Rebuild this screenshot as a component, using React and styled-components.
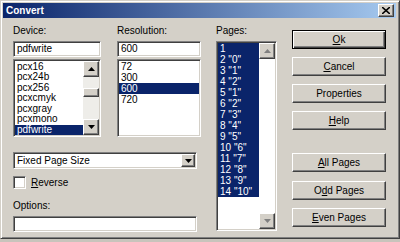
import React from "react";
import styled, { createGlobalStyle } from "styled-components";

const Global = createGlobalStyle`
  html, body { margin: 0; padding: 0; background: #c8c4bc; }
  body { font-family: "Liberation Sans", Arial, sans-serif; font-size: 10px; color: #000; }
`;

const raised = `
  border: 1px solid;
  border-color: #fff #404040 #404040 #fff;
  box-shadow: inset -1px -1px #808080, inset 1px 1px #d4d0c8;
`;

const sunken = `
  border: 1px solid;
  border-color: #808080 #fff #fff #808080;
  box-shadow: inset 1px 1px #404040, inset -1px -1px #d4d0c8;
`;

const Window = styled.div`
  width: 400px;
  height: 239px;
  box-sizing: border-box;
  background: #d4d0c8;
  border: 1px solid;
  border-color: #d4d0c8 #404040 #404040 #d4d0c8;
  box-shadow: inset 1px 1px #fff, inset -1px -1px #808080;
  padding: 2px 3px 3px 2px;
  display: flex;
  flex-direction: column;
`;

const TitleBar = styled.div`
  height: 15px;
  background: linear-gradient(to right, #0a246a, #a6caf0);
  display: flex;
  align-items: center;
  justify-content: space-between;
  padding: 0 2px 0 3px;
  color: #fff;
  font-weight: bold;
  font-size: 10px;
`;

const CloseButton = styled.div`
  ${raised}
  width: 14px;
  height: 11px;
  background: #d4d0c8;
  display: flex;
  align-items: center;
  justify-content: center;
`;

const Body = styled.div`
  display: flex;
  padding: 6px 0 0 10px;
`;

const LeftArea = styled.div`
  width: 188px;
  display: flex;
  flex-direction: column;
`;

const TopRow = styled.div`
  display: flex;
  gap: 16px;
`;

const Column = styled.div`
  width: ${p => p.$w}px;
  display: flex;
  flex-direction: column;
`;

const Label = styled.div`
  height: 13px;
  line-height: 13px;
  margin-bottom: 4px;
  margin-top: ${p => p.$top || 0}px;
`;

const Edit = styled.div`
  ${sunken}
  height: 16px;
  box-sizing: border-box;
  width: ${p => (p.$w ? `${p.$w}px` : "100%")};
  background: #fff;
  padding: 0 3px;
  line-height: 14px;
`;

const ListBox = styled.div`
  ${sunken}
  box-sizing: border-box;
  height: ${p => p.$h}px;
  margin-top: ${p => p.$top || 0}px;
  background: #fff;
  padding: 1px;
  display: flex;
`;

const Items = styled.div`
  flex: 1;
  overflow: hidden;
  display: flex;
  flex-direction: column;
  justify-content: ${p => (p.$bottom ? "flex-end" : "flex-start")};
`;

const Item = styled.div`
  flex: none;
  height: ${p => p.$h || 11}px;
  line-height: ${p => p.$h || 11}px;
  padding-left: 2px;
  white-space: pre;
  background: ${p => (p.$sel ? "#0a246a" : "transparent")};
  color: ${p => (p.$sel ? "#fff" : "#000")};
`;

const ScrollBar = styled.div`
  width: 16px;
  display: flex;
  flex-direction: column;
  background: ${p => (p.$disabled ? "#fff" : "#eeede9")};
`;

const ScrollButton = styled.div`
  ${raised}
  box-sizing: border-box;
  height: 16px;
  background: #d4d0c8;
  display: flex;
  align-items: center;
  justify-content: center;
  margin-top: ${p => p.$top || 0}px;
`;

const Thumb = styled.div`
  ${raised}
  box-sizing: border-box;
  height: 9px;
  background: #d4d0c8;
  margin-top: ${p => p.$top}px;
`;

const Spacer = styled.div`
  flex: 1;
`;

const Combo = styled.div`
  ${sunken}
  box-sizing: border-box;
  height: 17px;
  width: 184px;
  margin-top: 15px;
  background: #fff;
  display: flex;
  align-items: center;
  padding: 1px 1px 1px 3px;
`;

const ComboText = styled.div`
  flex: 1;
`;

const ComboButton = styled(ScrollButton)`
  width: 14px;
  height: 13px;
`;

const CheckRow = styled.label`
  display: flex;
  align-items: center;
  gap: 5px;
  margin-top: 7px;
  height: 13px;
`;

const CheckBox = styled.div`
  ${sunken}
  box-sizing: border-box;
  width: 13px;
  height: 13px;
  background: #fff;
`;

const PagesColumn = styled(Column)`
  margin-left: 15px;
`;

const ButtonColumn = styled.div`
  width: 94px;
  margin-left: 15px;
  padding-top: 6px;
  display: flex;
  flex-direction: column;
`;

const Button = styled.div`
  ${raised}
  box-sizing: border-box;
  height: 19px;
  margin-top: ${p => p.$top || 0}px;
  display: flex;
  align-items: center;
  justify-content: center;
  background: #d4d0c8;
  ${p =>
    p.$default &&
    `
    border: 1px solid #000;
    box-shadow: inset 1px 1px #fff, inset -1px -1px #404040, inset -2px -2px #808080;
  `}
`;

const Under = styled.span`
  text-decoration: underline;
`;

const Arrow = ({ up, gray }) => (
  <svg width="7" height="4" viewBox="0 0 7 4">
    <path d={up ? "M3.5 0 L7 4 L0 4 Z" : "M0 0 L7 0 L3.5 4 Z"} fill={gray ? "#808080" : "#000"} />
  </svg>
);

const devices = ["pcx16", "pcx24b", "pcx256", "pcxcmyk", "pcxgray", "pcxmono", "pdfwrite"];
const resolutions = ["72", "300", "600", "720"];
const pages = ["1", '2 "0"', '3 "1"', '4 "2"', '5 "1"', '6 "2"', '7 "3"', '8 "4"', '9 "5"', '10 "6"', '11 "7"', '12 "8"', '13 "9"', '14 "10"'];

export default function App() {
  return (
    <>
      <Global />
      <Window>
        <TitleBar>
          <span>Convert</span>
          <CloseButton>
            <svg width="8" height="7" viewBox="0 0 8 7">
              <path d="M0 0 L8 7 M8 0 L0 7" stroke="#000" strokeWidth="1.6" />
            </svg>
          </CloseButton>
        </TitleBar>
        <Body>
          <LeftArea>
            <TopRow>
              <Column $w={88}>
                <Label>Device:</Label>
                <Edit>pdfwrite</Edit>
                <ListBox $h={78} $top={2}>
                  <Items $bottom>
                    {devices.map(d => (
                      <Item key={d} $h={10.5} $sel={d === "pdfwrite"}>{d}</Item>
                    ))}
                  </Items>
                  <ScrollBar>
                    <ScrollButton><Arrow up /></ScrollButton>
                    <Thumb $top={11} />
                    <Spacer />
                    <ScrollButton><Arrow /></ScrollButton>
                  </ScrollBar>
                </ListBox>
              </Column>
              <Column $w={84}>
                <Label>Resolution:</Label>
                <Edit>600</Edit>
                <ListBox $h={78} $top={2}>
                  <Items>
                    {resolutions.map(r => (
                      <Item key={r} $sel={r === "600"}>{r}</Item>
                    ))}
                  </Items>
                </ListBox>
              </Column>
            </TopRow>
            <Combo>
              <ComboText>Fixed Page Size</ComboText>
              <ComboButton><Arrow /></ComboButton>
            </Combo>
            <CheckRow>
              <CheckBox />
              <span><Under>R</Under>everse</span>
            </CheckRow>
            <Label $top={10}>Options:</Label>
            <Edit $w={184}></Edit>
          </LeftArea>
          <PagesColumn $w={61}>
            <Label>Pages:</Label>
            <ListBox $h={190}>
              <Items>
                {pages.map(p => (
                  <Item key={p} $sel>{p}</Item>
                ))}
              </Items>
              <ScrollBar $disabled>
                <ScrollButton><Arrow up gray /></ScrollButton>
                <Spacer />
                <ScrollButton><Arrow gray /></ScrollButton>
              </ScrollBar>
            </ListBox>
          </PagesColumn>
          <ButtonColumn>
            <Button $default><span><Under>O</Under>k</span></Button>
            <Button $top={8}><span><Under>C</Under>ancel</span></Button>
            <Button $top={8}>Properties</Button>
            <Button $top={8}><span><Under>H</Under>elp</span></Button>
            <Button $top={23}><span><Under>A</Under>ll Pages</span></Button>
            <Button $top={9}><span>O<Under>d</Under>d Pages</span></Button>
            <Button $top={8}><span><Under>E</Under>ven Pages</span></Button>
          </ButtonColumn>
        </Body>
      </Window>
    </>
  );
}
